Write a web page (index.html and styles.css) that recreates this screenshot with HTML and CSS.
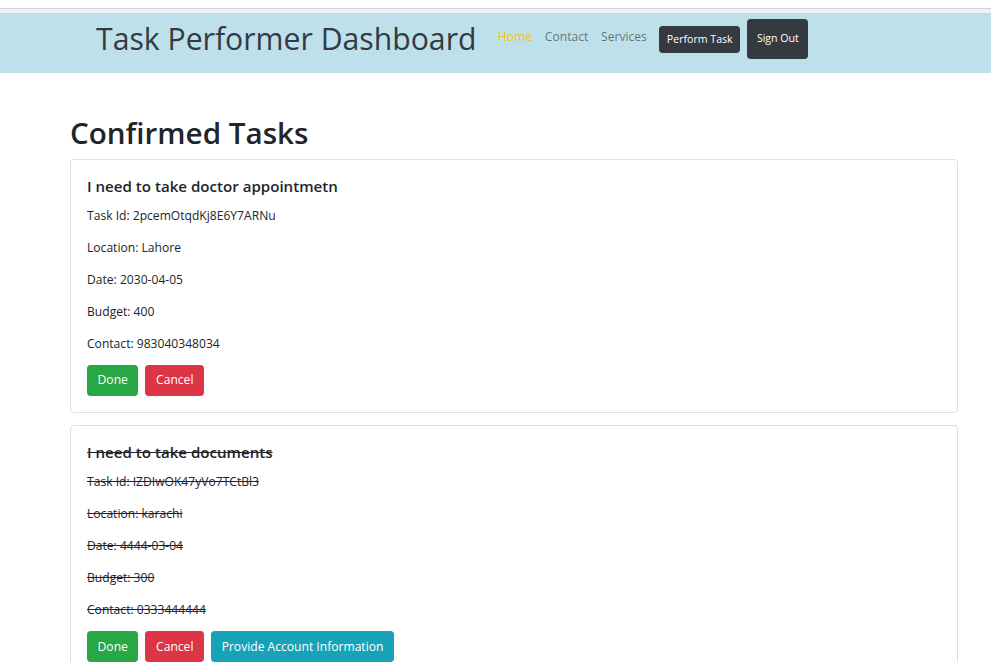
FILE: index.html
```html
<!DOCTYPE html>
<html lang="en">
<head>
<meta charset="utf-8">
<title>Task Performer Dashboard</title>
<link rel="stylesheet" href="styles.css">
</head>
<body>
<div class="topstrip"></div>
<nav class="navbar">
  <div class="brand">Task Performer Dashboard</div>
  <ul class="nav">
    <li><a class="nav-link active" href="#">Home</a></li>
    <li><a class="nav-link" href="#">Contact</a></li>
    <li><a class="nav-link" href="#">Services</a></li>
  </ul>
  <button class="btn btn-dark btn-perform">Perform Task</button>
  <button class="btn btn-dark btn-signout">Sign Out</button>
</nav>
<main class="container">
  <h1 class="page-title">Confirmed Tasks</h1>
  <div class="card">
    <h5 class="card-title">I need to take doctor appointmetn</h5>
    <p>Task Id: 2pcemOtqdKj8E6Y7ARNu</p>
    <p>Location: Lahore</p>
    <p>Date: 2030-04-05</p>
    <p>Budget: 400</p>
    <p>Contact: 983040348034</p>
    <div class="actions">
      <button class="btn btn-success">Done</button>
      <button class="btn btn-danger">Cancel</button>
    </div>
  </div>
  <div class="card done">
    <h5 class="card-title">I need to take documents</h5>
    <p>Task Id: IZDIwOK47yVo7TCtBl3</p>
    <p>Location: karachi</p>
    <p>Date: 4444-03-04</p>
    <p>Budget: 300</p>
    <p>Contact: 0333444444</p>
    <div class="actions">
      <button class="btn btn-success">Done</button>
      <button class="btn btn-danger">Cancel</button>
      <button class="btn btn-info">Provide Account Information</button>
    </div>
  </div>
</main>
</body>
</html>
```
FILE: styles.css
```css
* { box-sizing: border-box; }
html, body { margin: 0; padding: 0; }
body {
  font-family: "Open Sans", "Noto Sans", sans-serif;
  font-size: 12.1px;
  line-height: 19.2px;
  color: #212529;
  background: #fff;
  overflow: hidden;
}
.topstrip {
  height: 13px;
  border-top: 8px solid #fff;
  background: linear-gradient(#d2d2d2 0, #d2d2d2 1px, #f1f1f1 1px, #f1f1f1 100%);
}
.navbar {
  height: 60px;
  background: #bee0eb;
  display: flex;
  align-items: center;
  padding: 0 0 8px 96px;
}
.brand {
  font-size: 30.2px;
  line-height: 38px;
  font-weight: 400;
  color: #343a40;
  margin-right: 15px;
}
.nav {
  list-style: none;
  margin: 0 6px 4px 0;
  padding: 0;
  display: flex;
}
.nav-link {
  display: block;
  padding: 0 6.4px;
  color: rgba(0,0,0,0.5);
  text-decoration: none;
}
.nav-link.active { color: #ffc107; }
.btn {
  font-family: inherit;
  font-size: 12.1px;
  line-height: 19.2px;
  height: 31px;
  border: 1px solid transparent;
  border-radius: 3.2px;
  padding: 0 9.6px;
  color: #fff;
  cursor: pointer;
}
.btn-dark { background: #343a40; border-color: #343a40; }
.btn-perform { height: 27px; padding: 0 6.6px; font-size: 10.6px; margin-top: 1px; }
.btn-signout { height: 40px; padding: 0 8.6px; font-size: 10.6px; margin-left: 7px; }
.btn-success { background: #28a745; border-color: #28a745; }
.btn-danger { background: #dc3545; border-color: #dc3545; }
.btn-info { background: #17a2b8; border-color: #17a2b8; }
.container {
  padding: 41px 33px 0 70px;
}
.page-title {
  font-size: 29.6px;
  line-height: 38.4px;
  font-weight: 600;
  margin: 0 0 6.4px;
}
.card {
  border: 1px solid rgba(0,0,0,0.125);
  border-radius: 3.2px;
  padding: 17px 16px 16px;
  margin-bottom: 12.8px;
}
.card-title {
  font-size: 15.1px;
  line-height: 19.2px;
  font-weight: 600;
  margin: 0 0 9.6px;
}
.card p { margin: 0 0 12.8px; }
.card p:last-of-type { margin-bottom: 11.8px; }
.actions { display: flex; gap: 7px; }
.done .card-title, .done p { text-decoration: line-through; }
```
